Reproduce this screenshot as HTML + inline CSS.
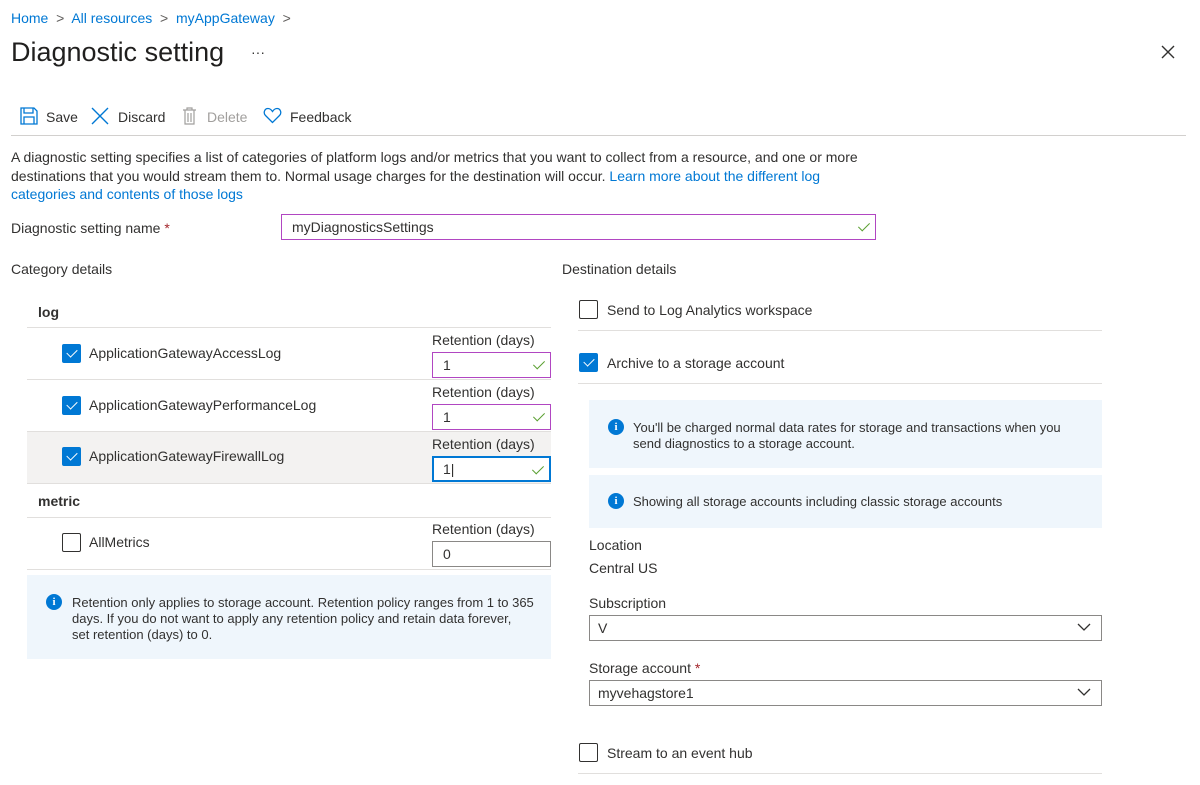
<!DOCTYPE html>
<html><head><meta charset="utf-8"><style>
*{margin:0;padding:0;box-sizing:border-box}
body{width:1200px;height:785px;background:#fff;font-family:"Liberation Sans",sans-serif;font-size:14px;color:#323130;position:relative;overflow:hidden}
.a{position:absolute;white-space:nowrap;line-height:18px}
.lk{color:#0078d4}
.ln{position:absolute;height:1px;background:#e1dfdd}
.cb{position:absolute;width:19px;height:19px;border:1px solid #323130;border-radius:2px;background:#fff}
.cb.on{background:#0078d4;border-color:#0078d4}
.cb.on:after{content:"";position:absolute;left:6px;top:2px;width:5px;height:9px;border:solid #fff;border-width:0 1.3px 1.3px 0;transform:rotate(45deg)}
.in{position:absolute;border:1px solid #b146c2;background:#fff;padding-left:10px;line-height:24px;font-size:14px}
.ok:after{content:"";position:absolute;right:8px;top:5px;width:5px;height:10px;border:solid #5ba032;border-width:0 1.5px 1.5px 0;transform:rotate(45deg)}
.info{position:absolute;background:#eff6fc}
.ic{position:absolute;width:16px;height:16px;border-radius:50%;background:#0078d4;color:#fff;font:bold 11px/16px "Liberation Serif",serif;text-align:center}
.sm{font-size:13px;line-height:16px}
.sel{position:absolute;border:1px solid #8a8886;padding-left:8px;line-height:24px}
.sel svg{position:absolute;right:10px;top:7px}
.t{top:1px}
</style></head><body>
<div class="a lk" style="left:11px;top:9px;font-size:14px">Home <span style="color:#605e5c">&nbsp;&gt;&nbsp;</span> All resources <span style="color:#605e5c">&nbsp;&gt;&nbsp;</span> myAppGateway <span style="color:#605e5c">&nbsp;&gt;</span></div>
<div class="a" style="left:11px;top:36px;font-size:27px;line-height:32px;color:#201f1e">Diagnostic setting</div>
<div class="a" style="left:251px;top:43px;font-size:14px">···</div>
<svg style="position:absolute;left:1161px;top:45px" width="14" height="14"><path d="M1 1L13 13M13 1L1 13" stroke="#323130" stroke-width="1.4"/></svg>
<svg style="position:absolute;left:20px;top:107px" width="18" height="18"><path d="M1 1h13l3 3v13H1z M4 1v5h9V1 M4 17v-7h10v7" fill="none" stroke="#0078d4" stroke-width="1.3"/></svg>
<div class="a" style="left:46px;top:108px">Save</div>
<svg style="position:absolute;left:91px;top:107px" width="18" height="18"><path d="M1 1L17 17M17 1L1 17" stroke="#0078d4" stroke-width="1.4"/></svg>
<div class="a" style="left:118px;top:108px">Discard</div>
<svg style="position:absolute;left:182px;top:107px" width="15" height="18"><path d="M1 3h13M5 3V1h5v2M3 3v14h9V3M6 6v9M9 6v9" fill="none" stroke="#a19f9d" stroke-width="1.2"/></svg>
<div class="a" style="left:207px;top:108px;color:#a19f9d">Delete</div>
<svg style="position:absolute;left:263px;top:107px" width="19" height="17"><path d="M9.5 15.5L2.5 8.5C0 6 1.5 1.5 5 1.5c2 0 3.5 1.5 4.5 3c1-1.5 2.5-3 4.5-3c3.5 0 5 4.5 2.5 7z" fill="none" stroke="#0078d4" stroke-width="1.3"/></svg>
<div class="a" style="left:290px;top:108px">Feedback</div>
<div class="ln" style="left:11px;top:135px;width:1175px;background:#d2d0ce"></div>
<div class="a" style="left:11px;top:148px;line-height:18.5px">A diagnostic setting specifies a list of categories of platform logs and/or metrics that you want to collect from a resource, and one or more<br>destinations that you would stream them to. Normal usage charges for the destination will occur. <span class="lk">Learn more about the different log</span><br><span class="lk">categories and contents of those logs</span></div>
<div class="a" style="left:11px;top:219px">Diagnostic setting name <span style="color:#a4262c">*</span></div>
<div class="in ok" style="left:281px;top:214px;width:595px;height:26px">myDiagnosticsSettings</div>
<div class="a" style="left:11px;top:260px">Category details</div>
<div class="a" style="left:562px;top:260px">Destination details</div>
<div class="a" style="left:38px;top:303px;font-weight:bold">log</div>
<div class="ln" style="left:27px;top:327px;width:524px"></div>
<div class="ln" style="left:27px;top:379px;width:524px"></div>
<div style="position:absolute;left:27px;top:432px;width:524px;height:51px;background:#f3f2f1"></div>
<div class="ln" style="left:27px;top:431px;width:524px"></div>
<div class="ln" style="left:27px;top:483px;width:524px"></div>
<div class="cb on" style="left:62px;top:344px"></div><div class="a" style="left:89px;top:344px">ApplicationGatewayAccessLog</div>
<div class="cb on" style="left:62px;top:396px"></div><div class="a" style="left:89px;top:396px">ApplicationGatewayPerformanceLog</div>
<div class="cb on" style="left:62px;top:447px"></div><div class="a" style="left:89px;top:447px">ApplicationGatewayFirewallLog</div>
<div class="a" style="left:432px;top:331px">Retention (days)</div>
<div class="in ok" style="left:432px;top:352px;width:119px;height:26px">1</div>
<div class="a" style="left:432px;top:383px">Retention (days)</div>
<div class="in ok" style="left:432px;top:404px;width:119px;height:26px">1</div>
<div class="a" style="left:432px;top:435px">Retention (days)</div>
<div class="in ok" style="left:432px;top:456px;width:119px;height:26px;border:2px solid #0078d4;padding-left:9px;line-height:22px">1|</div>
<div class="a" style="left:38px;top:492px;font-weight:bold">metric</div>
<div class="ln" style="left:27px;top:517px;width:524px"></div>
<div class="ln" style="left:27px;top:569px;width:524px"></div>
<div class="cb" style="left:62px;top:533px"></div><div class="a" style="left:89px;top:533px">AllMetrics</div>
<div class="a" style="left:432px;top:520px">Retention (days)</div>
<div class="in" style="left:432px;top:541px;width:119px;height:26px;border-color:#8a8886">0</div>
<div class="info" style="left:27px;top:575px;width:524px;height:84px"></div>
<div class="ic" style="left:46px;top:594px">i</div>
<div class="a sm" style="left:72px;top:595px">Retention only applies to storage account. Retention policy ranges from 1 to 365<br>days. If you do not want to apply any retention policy and retain data forever,<br>set retention (days) to 0.</div>
<div class="cb" style="left:579px;top:300px"></div><div class="a" style="left:607px;top:301px">Send to Log Analytics workspace</div>
<div class="ln" style="left:578px;top:330px;width:524px"></div>
<div class="cb on" style="left:579px;top:353px"></div><div class="a" style="left:607px;top:354px">Archive to a storage account</div>
<div class="ln" style="left:578px;top:383px;width:524px"></div>
<div class="info" style="left:589px;top:400px;width:513px;height:68px"></div>
<div class="ic" style="left:608px;top:419px">i</div>
<div class="a sm" style="left:633px;top:420px">You'll be charged normal data rates for storage and transactions when you<br>send diagnostics to a storage account.</div>
<div class="info" style="left:589px;top:475px;width:513px;height:53px"></div>
<div class="ic" style="left:608px;top:493px">i</div>
<div class="a sm" style="left:633px;top:494px">Showing all storage accounts including classic storage accounts</div>
<div class="a" style="left:589px;top:536px">Location</div>
<div class="a" style="left:589px;top:559px">Central US</div>
<div class="a" style="left:589px;top:594px">Subscription</div>
<div class="sel" style="left:589px;top:615px;width:513px;height:26px">V<svg width="14" height="9"><path d="M1 1l6 6 6-6" fill="none" stroke="#323130" stroke-width="1.3"/></svg></div>
<div class="a" style="left:589px;top:659px">Storage account <span style="color:#a4262c">*</span></div>
<div class="sel" style="left:589px;top:680px;width:513px;height:26px">myvehagstore1<svg width="14" height="9"><path d="M1 1l6 6 6-6" fill="none" stroke="#323130" stroke-width="1.3"/></svg></div>
<div class="cb" style="left:579px;top:743px"></div><div class="a" style="left:607px;top:744px">Stream to an event hub</div>
<div class="ln" style="left:578px;top:773px;width:524px"></div>
</body></html>
